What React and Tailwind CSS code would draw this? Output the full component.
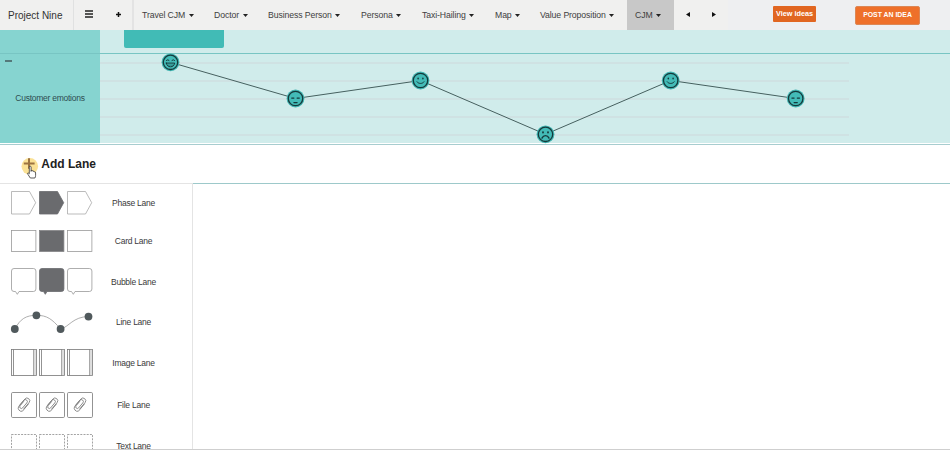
import React from "react";

const tabs = [
  { name: "Travel CJM", width: "w-[72px]", gap: "gap-[4px]" },
  { name: "Doctor", width: "w-[54px]", gap: "gap-[4px]" },
  { name: "Business Person", width: "w-[93px]", gap: "gap-[3px]" },
  { name: "Persona", width: "w-[61px]", gap: "gap-[3px]" },
  { name: "Taxi-Hailing", width: "w-[73px]", gap: "gap-[3px]" },
  { name: "Map", width: "w-[45px]", gap: "gap-[3px]" },
  { name: "Value Proposition", width: "w-[87px]", gap: "gap-[3px]" },
];

const points = [
  { x: 170.5, y: 62.3, mood: "laugh" },
  { x: 295.5, y: 98.5, mood: "flat" },
  { x: 420.5, y: 80.5, mood: "smile" },
  { x: 545.5, y: 134.3, mood: "sad" },
  { x: 670.7, y: 80.5, mood: "smile" },
  { x: 795.7, y: 98.5, mood: "flat" },
];

function Caret() {
  return (
    <svg className="mt-[1px] h-[3px] w-[5px] shrink-0" viewBox="0 0 5 3">
      <path d="M0 0h5L2.5 3z" fill="#222" />
    </svg>
  );
}

function Face({ x, y, mood }) {
  return (
    <g transform={`translate(${x} ${y})`} stroke="#15393b" strokeWidth="1" fill="none" strokeLinecap="round">
      <circle r="8.9" fill="#42b5b2" stroke="none" />
      <circle r="7.2" fill="#43bbb7" strokeWidth="1.3" />
      {mood === "laugh" && (
        <>
          <path d="M-4 -1.8l1.3-.7 1.2.7M1.5 -1.8l1.3-.7 1.2.7" />
          <path d="M-4.2 .8h8.4C3.8 3 2.3 4.5 0 4.5S-3.8 3-4.2 .8z" />
          <path d="M-3 2.800h6" strokeWidth=".5" />
        </>
      )}
      {mood === "flat" && (
        <path d="M-3.8 -.4h2.2M1.6 -.4h2.2M-1.6 4.1h3.2" strokeWidth="1.2" />
      )}
      {mood === "smile" && (
        <>
          <path d="M-2.4 -2.2v.4M2.4 -2.2v.4" strokeWidth="1.5" />
          <path d="M-3.5 1.3C-2 3.6 2 3.6 3.5 1.3" />
        </>
      )}
      {mood === "sad" && (
        <>
          <path d="M-2.5 -2.2v.4M2.5 -2.2v.4" strokeWidth="1.8" />
          <path d="M-3.5 3.8C-2 .5 2 .5 3.5 3.8" strokeWidth="1.4" />
        </>
      )}
    </g>
  );
}

function EmotionChart() {
  return (
    <svg className="h-[89px] w-[850px] overflow-visible" viewBox="100 54 850 89">
      {[63, 81, 99, 117, 135].map((y) => (
        <path key={y} d={`M100 ${y}H849`} stroke="#cfdfe1" strokeWidth="1.5" />
      ))}
      <polyline
        points={points.map((p) => `${p.x},${p.y}`).join(" ")}
        fill="none"
        stroke="#46605f"
        strokeWidth="1"
      />
      {points.map((p) => (
        <Face key={p.x} {...p} />
      ))}
    </svg>
  );
}

const slots = [0, 28, 56];

function PhaseIcon() {
  return slots.map((x, i) => (
    <path key={x} d={`M${x + 0.5} .5h18l6.2 11.2-6.2 11.3h-18z`} fill={i === 1 ? "#6a6b6e" : "#fff"} stroke={i === 1 ? "#6a6b6e" : "#aaa"} strokeWidth=".8" />
  ));
}

function CardIcon() {
  return slots.map((x, i) => (
    <rect key={x} x={x + 0.5} y=".5" width="24.4" height="21" fill={i === 1 ? "#6a6b6e" : "#fff"} stroke={i === 1 ? "#858587" : "#999"} strokeWidth=".8" />
  ));
}

function BubbleIcon() {
  return slots.map((x, i) => (
    <path
      key={x}
      d={`M${x + 3} .5h19.4q2.5 0 2.5 2.5v18q0 2.5-2.5 2.5h-14.4l-1.7 2.8-1.8-2.8h-1.5q-2.5 0-2.5-2.5v-18q0-2.5 2.5-2.5z`}
      fill={i === 1 ? "#6a6b6e" : "#fff"}
      stroke={i === 1 ? "#6a6b6e" : "#999"}
      strokeWidth=".8"
    />
  ));
}

function LineIcon() {
  return (
    <>
      <path d="M4 18C9 8 15 4.300 25.400 4.300C36 4.300 41 8 49.600 18C58 16 62 5.600 77.500 5.600" fill="none" stroke="#999" strokeWidth=".8" />
      {[[3.8, 18], [25.4, 4.3], [49.6, 18], [77.5, 5.6]].map(([x, y]) => (
        <circle key={x} cx={x} cy={y} r="3.9" fill="#50595c" />
      ))}
    </>
  );
}

function ImageIcon() {
  return slots.map((x) => (
    <g key={x} stroke="#777" strokeWidth=".8" fill="none">
      <rect x={x + 0.5} y=".5" width="25" height="26" />
      <path d={`M${x + 2.5} .5v26M${x + 22.7} .5v26`} />
      <path d={`M${x + 24.1} .5v26`} stroke="#bbb" />
    </g>
  ));
}

function FileIcon() {
  return slots.map((x) => (
    <g key={x} stroke="#777" strokeWidth=".8" fill="none">
      <rect x={x + 0.5} y=".5" width="25" height="25" rx="1.2" />
      <g transform={`translate(${x + 12.8} 12.6) rotate(40) scale(1.1)`} strokeLinecap="round" strokeWidth=".7">
        <path d="M2.500 3V-4.500a2.500 2.500 0 0 0-5 0V4.400a3 3 0 0 0 5.400 1V-3" />
        <path d="M-2.500 2.500V-3a1.800 1.800 0 0 1 3.600 0V3a1.500 1.500 0 0 1-3 0V-2" />
      </g>
    </g>
  ));
}

function TextIcon() {
  return slots.map((x) => (
    <rect key={x} x={x + 0.5} y=".5" width="25" height="25" fill="none" stroke="#999" strokeWidth=".9" strokeDasharray="2 1.2" />
  ));
}

const lanes = [
  { name: "Phase Lane", Icon: PhaseIcon, box: "h-[24px]", row: "h-[39px]", pad: "pt-[7px]", label: "h-[24px]" },
  { name: "Card Lane", Icon: CardIcon, box: "h-[22px]", row: "h-[38px]", pad: "pt-[7px]", label: "h-[22px]" },
  { name: "Bubble Lane", Icon: BubbleIcon, box: "h-[27px]", row: "h-[42px]", pad: "pt-[7px]", label: "h-[28px]" },
  { name: "Line Lane", Icon: LineIcon, box: "h-[23px]", row: "h-[38px]", pad: "pt-[8px]", label: "h-[22px]" },
  { name: "Image Lane", Icon: ImageIcon, box: "h-[27px]", row: "h-[43px]", pad: "pt-[8px]", label: "h-[28px]" },
  { name: "File Lane", Icon: FileIcon, box: "h-[26px]", row: "h-[42px]", pad: "pt-[8px]", label: "h-[26px]" },
  { name: "Text Lane", Icon: TextIcon, box: "h-[26px]", row: "h-[42px]", pad: "pt-[8px]", label: "h-[24px]" },
];

function Header() {
  return (
    <header className="flex h-[30px] shrink-0 items-stretch bg-[#eeeff1] text-[8.7px] tracking-[-0.1px] text-[#3e3e3e]">
      <div className="flex w-[728px] shrink-0 bg-[#f0f0ef]">
        <div className="flex w-[74px] shrink-0 items-center border-r border-[#e0e1e1] pl-[8px] text-[10px] tracking-normal text-[#333]">Project Nine</div>
        <div className="flex w-[60px] shrink-0 items-center border-r-2 border-[#e3e3e3] pb-[2px] pl-[11px]">
          <svg className="h-[8px] w-[8px]" viewBox="0 0 8 8">
            <path d="M0 1h8M0 4h8M0 7h8" stroke="#222" strokeWidth="1.4" />
          </svg>
          <svg className="ml-[23px] h-[5px] w-[5px]" viewBox="0 0 5 5">
            <path d="M0 2.500h5M2.500 0v5" stroke="#111" strokeWidth="1.500" />
          </svg>
        </div>
        <nav className="flex pl-[8px]">
          {tabs.map((t) => (
            <button key={t.name} className={`flex shrink-0 items-center whitespace-nowrap ${t.width} ${t.gap}`}>
              <span className="pt-[1px]">{t.name}</span>
              <Caret />
            </button>
          ))}
        </nav>
        <button className="flex w-[47px] shrink-0 items-center gap-[3px] bg-[#c8c8c8] pl-[8px]">
          <span className="pt-[1px]">CJM</span>
          <Caret />
        </button>
        <div className="flex items-center gap-[22px] pb-[2px] pl-[12px]">
          <svg className="h-[5px] w-[4px]" viewBox="0 0 4 5"><path d="M4 0v5L0 2.500z" fill="#111" /></svg>
          <svg className="h-[5px] w-[4px]" viewBox="0 0 4 5"><path d="M0 0v5l4-2.500z" fill="#111" /></svg>
        </div>
      </div>
      <button className="mt-[6px] ml-[45px] flex h-[16px] w-[43px] items-center justify-center rounded-[1px] bg-[#e16621] text-[7.3px] font-bold tracking-normal whitespace-nowrap text-white">View ideas</button>
      <button className="mt-[6px] ml-[39px] flex h-[19px] w-[65px] items-center justify-center rounded-[2px] border border-[#dc8755] bg-[#ee702a] text-[6.9px] font-bold tracking-normal whitespace-nowrap text-white">POST AN IDEA</button>
    </header>
  );
}

export default function App() {
  return (
    <div className="flex h-[450px] w-[950px] flex-col overflow-hidden bg-white font-['Liberation_Sans',Arial,sans-serif] text-[#3a3a3a]">
      <Header />
      <section className="flex h-[24px] shrink-0 border-b border-[#78c5c3] bg-[#d0eceb]">
        <div className="w-[100px] bg-[#86d4d0]" />
        <div className="ml-[24px] h-[18px] w-[100px] rounded-b-[2px] bg-[#41bbb6]" />
      </section>
      <section className="flex h-[89px] shrink-0 bg-[#d0eceb]">
        <div className="flex w-[100px] shrink-0 flex-col bg-[#86d4d0]">
          <div className="mt-[6px] ml-[5px] h-[2px] w-[7px] bg-[#55797a]" />
          <div className="mt-[31px] text-center text-[8.5px] leading-[11px] tracking-[-0.26px] text-[#2e4d50]">Customer emotions</div>
        </div>
        <EmotionChart />
      </section>
      <section className="mt-px flex h-[39px] shrink-0 items-start border-t border-[#a7cdcf] pl-[20px]">
        <svg className="mt-[11px] h-[24px] w-[20px]" viewBox="20 156 20 24">
          <circle cx="29.8" cy="166.300" r="8.300" fill="#fae196" />
          <path d="M29 158.300v10.500M23.800 163.500h10.800" stroke="#9b7341" strokeWidth="2" />
          <path d="M29.300 167.200q0-1 .9-1t.9 1v4.200l.2-1q1.500-.2 1.500.8 1.500-.4 1.600.7 1.300-.2 1.200 1v2.500q0 1.400-.7 2.600h-4.600l-2.400-3.700q-.6-1-.1-1.300.5-.3 1.500.8z" fill="#fff" stroke="#333" strokeWidth=".8" />
        </svg>
        <h2 className="mt-[12px] ml-[1.300px] text-[12px] leading-[15px] font-bold text-[#222]">Add Lane</h2>
      </section>
      <section className="flex h-[266px] shrink-0">
        <aside className="h-[266px] w-[193px] shrink-0 overflow-hidden border-t border-r border-[#e4e4e4]">
          {lanes.map(({ name, Icon, box, row, pad, label }) => (
            <div key={name} className={`flex items-start pl-[11px] ${row} ${pad}`}>
              <svg className={`w-[82px] shrink-0 overflow-visible ${box}`} viewBox={`0 0 82 ${box.slice(3, 5)}`}>
                <Icon />
              </svg>
              <div className={`ml-[5px] flex w-[71px] items-center justify-center text-[8.5px] leading-[10px] tracking-[-0.25px] ${label}`}>{name}</div>
            </div>
          ))}
        </aside>
        <main className="flex-1 border-t border-[#9dc9ca]" />
      </section>
      <footer className="h-px shrink-0 bg-[#cfcfcf]" />
    </div>
  );
}
